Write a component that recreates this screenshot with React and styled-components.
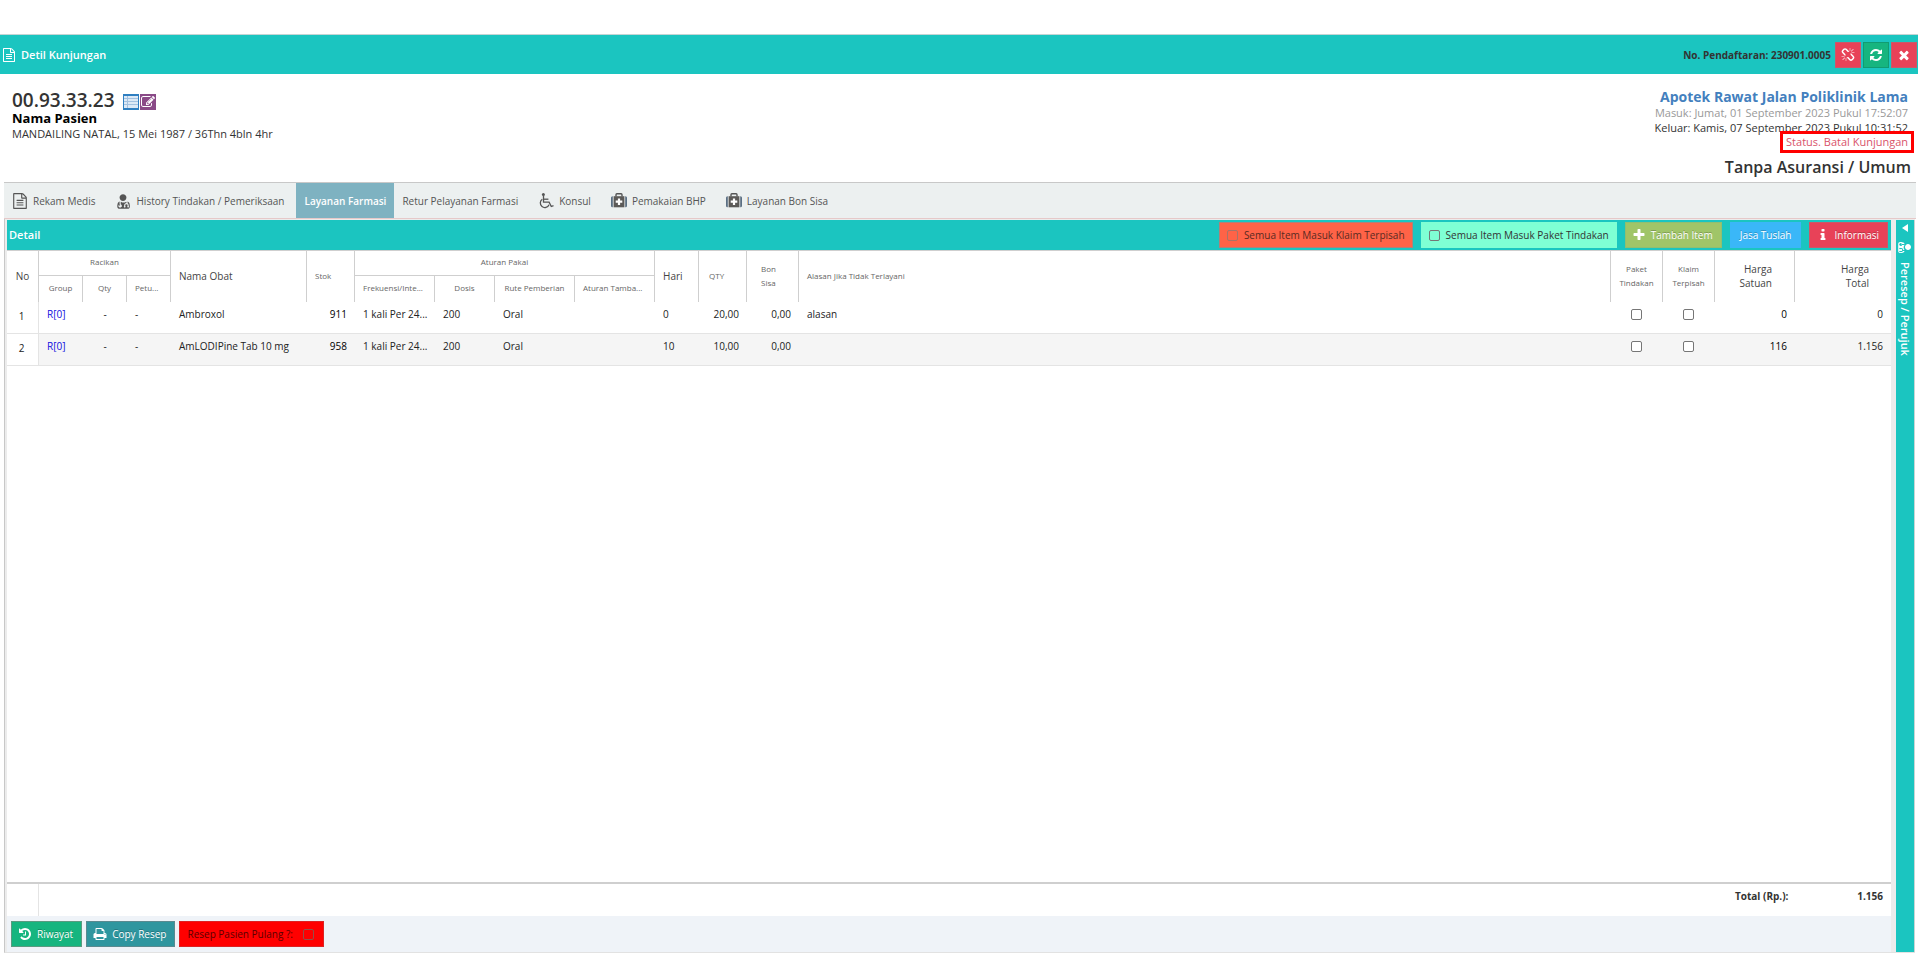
import React from "react";
import styled, { createGlobalStyle } from "styled-components";

const TEAL = "#1bc5c0";
const LINE = "#cfcfcf";

const Global = createGlobalStyle`
  *, *::before, *::after { box-sizing: border-box; }
  body {
    margin: 0;
    background: #fff;
    color: #333;
    font: 10px/16px "Open Sans", sans-serif;
  }
  button, input { font: inherit; margin: 0; }
`;

/* ---------- icons ---------- */

const paths = {
  file: "M1596 380q28 28 48 76t20 88v1152q0 40-28 68t-68 28h-1344q-40 0-68-28t-28-68v-1600q0-40 28-68t68-28h896q40 0 88 20t76 48zm-444-244v376h376q-10-29-22-41l-313-313q-12-12-41-22zm384 1528v-1024h-416q-40 0-68-28t-28-68v-416h-768v1536h1280zm-1024-864q0-14 9-23t23-9h704q14 0 23 9t9 23v64q0 14-9 23t-23 9h-704q-14 0-23-9t-9-23v-64zm736 224q14 0 23 9t9 23v64q0 14-9 23t-23 9h-704q-14 0-23-9t-9-23v-64q0-14 9-23t23-9h704zm0 256q14 0 23 9t9 23v64q0 14-9 23t-23 9h-704q-14 0-23-9t-9-23v-64q0-14 9-23t23-9h704z",
  edit: "M888 1184l116-116-152-152-116 116v56h96v96h56zm440-720q-16-16-33 1l-350 350q-17 17-1 33t33-1l350-350q17-17 1-33zm80 594v190q0 119-84.5 203.5t-203.5 84.5h-832q-119 0-203.5-84.5t-84.5-203.5v-832q0-119 84.5-203.5t203.5-84.5h832q63 0 117 25 15 7 18 23 3 17-9 29l-49 49q-14 14-32 8-23-6-45-6h-832q-66 0-113 47t-47 113v832q0 66 47 113t113 47h832q66 0 113-47t47-113v-126q0-13 9-22l64-64q15-15 35-7t20 29zm-96-738l288 288-672 672h-288v-288zm444 132l-92 92-288-288 92-92q28-28 68-28t68 28l152 152q28 28 28 68t-28 68z",
  times: "M1490 1322q0 40-28 68l-136 136q-28 28-68 28t-68-28l-294-294-294 294q-28 28-68 28t-68-28l-136-136q-28-28-28-68t28-68l294-294-294-294q-28-28-28-68t28-68l136-136q28-28 68-28t68 28l294 294 294-294q28-28 68-28t68 28l136 136q28 28 28 68t-28 68l-294 294 294 294q28 28 28 68z",
  plus: "M1600 736v192q0 40-28 68t-68 28h-416v416q0 40-28 68t-68 28h-192q-40 0-68-28t-28-68v-416h-416q-40 0-68-28t-28-68v-192q0-40 28-68t68-28h416v-416q0-40 28-68t68-28h192q40 0 68 28t28 68v416h416q40 0 68 28t28 68z",
  refresh: "M1639 1056q0 5-1 7-64 268-268 434.5t-478 166.5q-146 0-282.5-55t-243.5-157l-129 129q-19 19-45 19t-45-19-19-45v-448q0-26 19-45t45-19h448q26 0 45 19t19 45-19 45l-137 137q71 66 161 102t187 36q134 0 250-65t186-179q11-17 53-117 8-23 30-23h192q13 0 22.5 9.5t9.5 22.5zm25-800v448q0 26-19 45t-45 19h-448q-26 0-45-19t-19-45 19-45l138-138q-148-137-349-137-134 0-250 65t-186 179q-11 17-53 117-8 23-30 23h-199q-13 0-22.5-9.5t-9.5-22.5v-7q65-268 270-434.5t480-166.5q146 0 284 55.5t245 156.5l130-129q19-19 45-19t45 19 19 45z",
  history: "M1664 896q0 156-61 298t-164 245-245 164-298 61q-172 0-327-72.5t-264-204.5q-7-10-6.5-22.5t8.5-20.5l137-138q10-9 25-9 16 2 23 12 73 95 179 147t225 52q104 0 198.5-40.5t163.5-109.5 109.5-163.5 40.5-198.5-40.5-198.5-109.5-163.5-163.5-109.5-198.5-40.5q-98 0-188 35.5t-160 101.5l137 138q31 30 14 69-17 40-59 40h-448q-26 0-45-19t-19-45v-448q0-42 40-59 39-17 69 14l130 129q107-101 244.5-156.5t284.5-55.5q156 0 298 61t245 164 164 245 61 298zM1024 608v448q0 14-9 23t-23 9h-320q-14 0-23-9t-9-23v-64q0-14 9-23t23-9h224v-352q0-14 9-23t23-9h64q14 0 23 9t9 23z",
  print: "M448 1536h896v-256h-896v256zm0-640h896v-384h-160q-40 0-68-28t-28-68v-160h-640v640zm1152 64q0-26-19-45t-45-19-45 19-19 45 19 45 45 19 45-19 19-45zm128 0v416q0 13-9.5 22.5t-22.5 9.5h-224v160q0 40-28 68t-68 28h-960q-40 0-68-28t-28-68v-160h-224q-13 0-22.5-9.5t-9.5-22.5v-416q0-79 56.5-135.5t135.5-56.5h64v-544q0-40 28-68t68-28h672q40 0 88 20t76 48l152 152q28 28 48 76t20 88v256h64q79 0 135.5 56.5t56.5 135.5z",
  info: "M1216 1344v128q0 26-19 45t-45 19h-512q-26 0-45-19t-19-45v-128q0-26 19-45t45-19h64v-384h-64q-26 0-45-19t-19-45v-128q0-26 19-45t45-19h384q26 0 45 19t19 45v576h64q26 0 45 19t19 45zm-128-1152v192q0 26-19 45t-45 19h-256q-26 0-45-19t-19-45v-192q0-26 19-45t45-19h256q26 0 45 19t19 45z",
  unlink: "M503 1271l-256 256q-10 9-23 9-12 0-23-9-9-10-9-23t9-23l256-256q10-9 23-9t23 9q9 10 9 23t-9 23zm169 41v320q0 14-9 23t-23 9-23-9-9-23v-320q0-14 9-23t23-9 23 9 9 23zm-224-224q0 14-9 23t-23 9h-320q-14 0-23-9t-9-23 9-23 23-9h320q14 0 23 9t9 23zm1264 128q0 120-85 203l-147 146q-83 83-203 83-121 0-204-85l-334-335q-21-21-42-56l239-18 273 274q27 27 68 27.5t68-26.5l147-146q28-28 28-67 0-40-28-68l-274-275 18-239q35 21 56 42l336 336q84 86 84 204zm-617-724l-239 18-273-274q-28-28-68-28-39 0-68 27l-147 146q-28 28-28 67 0 40 28 68l274 274-18 240q-35-21-56-42l-336-336q-84-86-84-204 0-120 85-203l147-146q83-83 203-83 121 0 204 85l334 335q21 21 42 56zm633 84q0 14-9 23t-23 9h-320q-14 0-23-9t-9-23 9-23 23-9h320q14 0 23 9t9 23zm-544-544v320q0 14-9 23t-23 9-23-9-9-23v-320q0-14 9-23t23-9 23 9 9 23zm407 151l-256 256q-11 9-23 9t-23-9q-9-10-9-23t9-23l256-256q10-9 23-9t23 9q9 10 9 23t-9 23z",
  doctor: "M576 1344q0 26-19 45t-45 19-45-19-19-45 19-45 45-19 45 19 19 45zm1088 160q0 121-73 191t-194 70h-874q-121 0-194-70t-73-191q0-68 5.5-131t24-138 47.5-132.5 81-103 120-60.5q-22 52-22 120v203q-58 20-93 70t-35 111q0 80 56 136t136 56 136-56 56-136q0-61-35.5-111t-92.5-70v-203q0-62 25-93 132 104 295 104t295-104q25 31 25 93v64q-106 0-181 75t-75 181v89q-32 29-32 71 0 40 28 68t68 28 68-28 28-68q0-42-32-71v-89q0-52 38-90t90-38 90 38 38 90v89q-32 29-32 71 0 40 28 68t68 28 68-28 28-68q0-42-32-71v-89q0-68-34.5-127.5t-93.5-93.5q0-10 .5-42.5t0-48-2.5-41.5-7-47-13-40q68 15 120 60.5t81 103 47.5 132.5 24 138 5.5 131zm-384-992q0 159-112.5 271.5t-271.500 112.500-271.500-112.500-112.500-271.500 112.500-271.500 271.500-112.500 271.500 112.500 112.500 271.500z",
};

const Svg = styled.svg`
  flex: none;
  display: block;
`;

const Glyph = ({ name, size = 14, className }) => (
  <Svg className={className} width={size} height={size} viewBox="0 0 1792 1792" fill="currentColor" aria-hidden="true">
    <path d={paths[name]} />
  </Svg>
);

const SideGlyph = styled(Glyph)`
  transform: rotate(90deg);
`;

const Wheelchair = () => (
  <Svg width="16" height="16" viewBox="0 0 16 16" fill="none" stroke="currentColor" strokeWidth="1.3" aria-hidden="true">
    <circle cx="5.4" cy="1.600" r="1.500" fill="currentColor" stroke="none" />
    <path d="M5.500 2.800v6.400h5.600l2.200 4.300 2.200-.8" />
    <path d="M5.600 6.200h4.800" />
    <path d="M4.300 6.300a4.500 4.500 0 1 0 6.700 5.400" />
  </Svg>
);

const Medkit = () => (
  <Svg width="16" height="16" viewBox="0 0 16 16" aria-hidden="true">
    <path d="M5 3.500V1.700q0-.9.900-.9h4.200q.9 0 .9.900V3.500" fill="none" stroke="#555" strokeWidth="1.400" />
    <path d="M1.800 3.200H1.500Q0 3.200 0 4.700v8.100q0 1.500 1.500 1.500h.3zM14.200 3.200h.3q1.500 0 1.500 1.500v8.100q0 1.500-1.500 1.500h-.3z" fill="#5b6f83" />
    <path d="M2.600 3.200h10.800v11.100H2.600z" fill="#5c5a58" />
    <path d="M6.900 5.500h2.200v2.100h2.200v2.200H9.100v2.100H6.900V9.800H4.700V7.600h2.200z" fill="#fff" />
  </Svg>
);

const ListTile = () => (
  <Svg width="16" height="16" viewBox="0 0 16 16" aria-hidden="true">
    <path d="M0 0h16v16H0z" fill="#2f7fc1" />
    <path d="M1 2h14v12H1z" fill="#dce9f6" />
    <path d="M1 4.500h14M1 7.500h14M1 10.500h14M4.500 2v12" stroke="#a3c1e0" />
  </Svg>
);

/* ---------- page shell ---------- */

const Page = styled.div`
  display: flex;
  flex-direction: column;
  min-height: 100vh;
  padding: 34px 0 4px;
`;

const TitleBar = styled.header`
  display: flex;
  align-items: center;
  justify-content: space-between;
  height: 40px;
  padding: 0 1px 0 2px;
  border-top: 1px solid #c4d4d4;
  background: ${TEAL};
`;

const Title = styled.h1`
  display: flex;
  align-items: center;
  gap: 5px;
  margin: 0;
  color: #fff;
  font-size: 11px;
  font-weight: 600;
`;

const TitleTools = styled.div`
  display: flex;
  align-items: center;
  gap: 2px;
`;

const RegNumber = styled.span`
  margin-right: 2px;
  font-weight: 700;
`;

const SquareButton = styled.button`
  display: grid;
  place-items: center;
  width: 26px;
  height: 26px;
  padding: 0;
  border: 1px solid ${(p) => p.$edge};
  background: ${(p) => p.$bg};
  color: #fff;
`;

const Patient = styled.section`
  display: flex;
  justify-content: space-between;
  height: 108px;
  padding: 15px 7px 0 12px;
`;

const PatientId = styled.h2`
  display: flex;
  align-items: flex-end;
  gap: 8px;
  margin: 0;
  font-size: 19px;
  line-height: 22px;
  font-weight: 600;
`;

const Tiles = styled.span`
  display: flex;
  gap: 1px;
  padding-bottom: 1px;
`;

const Tile = styled.button`
  display: grid;
  place-items: center;
  width: 16px;
  height: 16px;
  padding: 0;
  border: 0;
  background: ${(p) => p.$bg};
  color: #fff;
`;

const PatientName = styled.p`
  margin: 0;
  color: #000;
  font-size: 13px;
  line-height: 14px;
  font-weight: 700;
`;

const PatientMeta = styled.p`
  margin: 1px 0 0;
  font-size: 11px;
`;

const Visit = styled.div`
  display: flex;
  flex-direction: column;
  align-items: flex-end;
`;

const VisitUnit = styled.h2`
  margin: 0 3px 0 0;
  color: #4380be;
  font-size: 14px;
  line-height: 16px;
  font-weight: 700;
`;

const VisitLine = styled.p`
  margin: 0 3px 0 0;
  color: ${(p) => p.$color || "#333"};
  font-size: 11px;
  line-height: 15px;
`;

const StatusLine = styled(VisitLine)`
  position: relative;
  line-height: 14px;
  &::after {
    content: "";
    position: absolute;
    inset: -4px -6px;
    border: 3px solid #f00;
  }
`;

const Insurance = styled.p`
  margin: 6px 0 0;
  font-size: 16px;
  line-height: 24px;
  font-weight: 600;
`;

/* ---------- tabs ---------- */

const Tabs = styled.nav`
  display: flex;
  height: 37px;
  margin: 0 2px 0 4px;
  border-top: 1px solid #c8c8c8;
  border-bottom: 1px solid #e6c9c9;
  background: #ecf0f0;
`;

const Tab = styled.button`
  display: flex;
  align-items: center;
  gap: 5px;
  padding: ${(p) => (p.$active ? "0 8px" : "0 12px 0 8px")};
  border: 0;
  background: ${(p) => (p.$active ? "#7eb2c1" : "transparent")};
  color: ${(p) => (p.$active ? "#fff" : "#555")};
  font-weight: ${(p) => (p.$active ? 600 : 400)};
`;

/* ---------- workspace ---------- */

const Workspace = styled.main`
  flex: 1;
  display: flex;
  margin: 0 3px 0 4px;
  padding-top: 1px;
  border-left: 1px solid #c8c8c8;
  border-bottom: 1px solid #e2e2e2;
  background: #ececec;
`;

const Panel = styled.section`
  flex: 1;
  min-width: 0;
  display: flex;
  flex-direction: column;
  margin: 0 5px 0 2px;
  background: #fff;
`;

const PanelBar = styled.div`
  display: flex;
  align-items: center;
  gap: 8px;
  height: 31px;
  padding: 0 3px 0 2px;
  border-bottom: 1px solid ${LINE};
  background: ${TEAL};
`;

const PanelTitle = styled.h2`
  flex: 1;
  margin: 0;
  color: #fff;
  font-size: 11px;
  font-weight: 600;
`;

const Action = styled.button`
  display: flex;
  align-items: center;
  gap: 5px;
  height: 26px;
  padding: 0 8px 0 ${(p) => (p.$plain ? 9 : 6)}px;
  border: 1px solid ${(p) => p.$edge || p.$bg};
  background: ${(p) => p.$bg};
  color: #fff;
  text-shadow: 0 -1px 0 rgba(0, 0, 0, 0.25);
`;

const CheckPill = styled.label`
  display: flex;
  align-items: center;
  gap: ${(p) => (p.$loose ? 10 : 6)}px;
  height: 26px;
  padding: 0 ${(p) => (p.$loose ? 9 : 7)}px 0 7px;
  border: 1px solid ${(p) => p.$edge || p.$bg};
  background: ${(p) => p.$bg};
  color: ${(p) => p.$ink || "#333"};
`;

const Tick = styled.input.attrs({ type: "checkbox" })`
  appearance: none;
  flex: none;
  width: 11px;
  height: 11px;
  border: 1px solid ${(p) => p.$edge || "#767676"};
  border-radius: 2px;
  background: ${(p) => p.$bg || "#fff"};
`;

/* ---------- table ---------- */

const Grid = styled.table`
  width: 100%;
  table-layout: fixed;
  border-collapse: separate;
  border-spacing: 0;
`;

const Col = styled.col`
  width: ${(p) => (p.$w ? `${p.$w}px` : "auto")};
`;

const Head = styled.th`
  height: ${(p) => (p.$sub ? 26 : 25)}px;
  padding: 0 ${(p) => p.$pad || 8}px 2px;
  border-right: ${(p) => (p.$last ? "0" : `1px solid ${LINE}`)};
  border-bottom: ${(p) => (p.$group ? `1px solid ${LINE}` : "0")};
  color: ${(p) => (p.$big ? "#444" : "#666")};
  font-size: ${(p) => (p.$big ? 10 : 8)}px;
  line-height: 14px;
  font-weight: 400;
  text-align: ${(p) => p.$align || "left"};
  white-space: ${(p) => (p.$sub ? "nowrap" : "normal")};
`;

const Cell = styled.td`
  height: 32px;
  padding: 0 8px 8px;
  border-bottom: 1px solid #e4e4e4;
  background: ${(p) => (p.$striped ? "#f5f5f5" : "#fff")};
  color: ${(p) => p.$color || "#222"};
  text-align: ${(p) => p.$align || "left"};
  white-space: nowrap;
`;

const NumberCell = styled(Cell)`
  padding: 0 2px 4px 0;
  border-right: 1px solid #e4e4e4;
  background: #fff;
  text-align: center;
`;

const CheckCell = styled(Cell)`
  padding: 0 2px 8px 0;
  text-align: center;
  & > ${Tick} { vertical-align: middle; }
`;

const GroupLink = styled.a`
  color: #1010e0;
  text-decoration: none;
`;

const Totals = styled.div`
  display: flex;
  justify-content: flex-end;
  height: 34px;
  margin-top: auto;
  padding: 4px 8px 0 0;
  border-top: 2px solid ${LINE};
  background: linear-gradient(#e4e4e4, #e4e4e4) 31px 0 / 1px 100% no-repeat;
  font-weight: 700;
`;

const TotalLabel = styled.span`
  width: 96px;
`;

const TotalValue = styled.span`
  width: 52px;
  text-align: right;
`;

const BottomBar = styled.footer`
  display: flex;
  align-items: center;
  gap: 4px;
  height: 36px;
  padding: 0 4px;
  background: #eff3f8;
`;

const SideStrip = styled.button`
  display: flex;
  flex-direction: column;
  align-items: center;
  gap: 8px;
  width: 19px;
  padding: 4px 0 0;
  border: 0;
  border-right: 1px solid #c8d4d4;
  background: ${TEAL};
  color: #fff;
`;

const SideLabel = styled.span`
  writing-mode: vertical-rl;
  font-size: 11px;
  font-weight: 600;
`;

const columns = [32, 44, 44, 44, 136, 48, 80, 60, 80, 80, 44, 48, 52, null, 52, 52, 80, 96];

const rows = [
  { no: 1, group: "R[0]", name: "Ambroxol", stock: "911", freq: "1 kali Per 24...", dose: "200", route: "Oral", days: "0", qty: "20,00", owed: "0,00", reason: "alasan", price: "0", total: "0" },
  { no: 2, group: "R[0]", name: "AmLODIPine Tab 10 mg", stock: "958", freq: "1 kali Per 24...", dose: "200", route: "Oral", days: "10", qty: "10,00", owed: "0,00", reason: "", price: "116", total: "1.156" },
];

const tabs = [
  { label: "Rekam Medis", icon: <Glyph name="file" size={16} /> },
  { label: "History Tindakan / Pemeriksaan", icon: <Glyph name="doctor" size={16} /> },
  { label: "Layanan Farmasi", active: true },
  { label: "Retur Pelayanan Farmasi" },
  { label: "Konsul", icon: <Wheelchair /> },
  { label: "Pemakaian BHP", icon: <Medkit /> },
  { label: "Layanan Bon Sisa", icon: <Medkit /> },
];

export default function App() {
  return (
    <>
      <Global />
      <Page>
        <TitleBar>
          <Title><Glyph name="file" />Detil Kunjungan</Title>
          <TitleTools>
            <RegNumber>No. Pendaftaran: 230901.0005</RegNumber>
            <SquareButton $bg="#e84258" $edge="#c9596a" aria-label="Putuskan"><Glyph name="unlink" /></SquareButton>
            <SquareButton $bg="#16b57f" $edge="#109c72" aria-label="Muat ulang"><Glyph name="refresh" /></SquareButton>
            <SquareButton $bg="#e84258" $edge="#c9596a" aria-label="Tutup"><Glyph name="times" /></SquareButton>
          </TitleTools>
        </TitleBar>

        <Patient>
          <div>
            <PatientId>
              00.93.33.23
              <Tiles>
                <Tile aria-label="Daftar"><ListTile /></Tile>
                <Tile $bg="#8a4a87" aria-label="Ubah"><Glyph name="edit" /></Tile>
              </Tiles>
            </PatientId>
            <PatientName>Nama Pasien</PatientName>
            <PatientMeta>MANDAILING NATAL, 15 Mei 1987 / 36Thn 4bln 4hr</PatientMeta>
          </div>
          <Visit>
            <VisitUnit>Apotek Rawat Jalan Poliklinik Lama</VisitUnit>
            <VisitLine $color="#999">Masuk: Jumat, 01 September 2023 Pukul 17:52:07</VisitLine>
            <VisitLine>Keluar: Kamis, 07 September 2023 Pukul 10:31:52</VisitLine>
            <StatusLine $color="#d9536a">Status. Batal Kunjungan</StatusLine>
            <Insurance>Tanpa Asuransi / Umum</Insurance>
          </Visit>
        </Patient>

        <Tabs>
          {tabs.map((t) => (
            <Tab key={t.label} $active={t.active}>{t.icon}{t.label}</Tab>
          ))}
        </Tabs>

        <Workspace>
          <Panel>
            <PanelBar>
              <PanelTitle>Detail</PanelTitle>
              <CheckPill $bg="#ff6347" $edge="#b08078" $ink="#5a2a22">
                <Tick $bg="transparent" $edge="#a87468" />Semua Item Masuk Klaim Terpisah
              </CheckPill>
              <CheckPill $bg="#7fffd4">
                <Tick $bg="transparent" />Semua Item Masuk Paket Tindakan
              </CheckPill>
              <Action $bg="#a0c568" $edge="#8fbf72"><Glyph name="plus" />Tambah Item</Action>
              <Action $bg="#3ab7f8" $plain>Jasa Tuslah</Action>
              <Action $bg="#e84258" $edge="#c9596a"><Glyph name="info" />Informasi</Action>
            </PanelBar>

            <Grid>
              <colgroup>{columns.map((w, i) => <Col key={i} $w={w} />)}</colgroup>
              <thead>
                <tr>
                  <Head rowSpan={2} $big $align="center">No</Head>
                  <Head colSpan={3} $group $align="center">Racikan</Head>
                  <Head rowSpan={2} $big>Nama Obat</Head>
                  <Head rowSpan={2}>Stok</Head>
                  <Head colSpan={4} $group $align="center">Aturan Pakai</Head>
                  <Head rowSpan={2} $big>Hari</Head>
                  <Head rowSpan={2} $pad={10}>QTY</Head>
                  <Head rowSpan={2} $pad={14}>Bon Sisa</Head>
                  <Head rowSpan={2}>Alasan Jika Tidak Terlayani</Head>
                  <Head rowSpan={2} $align="center">Paket Tindakan</Head>
                  <Head rowSpan={2} $align="center">Klaim Terpisah</Head>
                  <Head rowSpan={2} $big $align="right" $pad={22}>Harga Satuan</Head>
                  <Head rowSpan={2} $big $align="right" $pad={22} $last>Harga<br />Total</Head>
                </tr>
                <tr>
                  <Head $sub $align="center">Group</Head>
                  <Head $sub $align="center">Qty</Head>
                  <Head $sub>Petu...</Head>
                  <Head $sub>Frekuensi/Inte...</Head>
                  <Head $sub $align="center">Dosis</Head>
                  <Head $sub $align="center">Rute Pemberian</Head>
                  <Head $sub>Aturan Tamba...</Head>
                </tr>
              </thead>
              <tbody>
                {rows.map((r, i) => {
                  const s = i % 2 === 1;
                  return (
                    <tr key={r.no}>
                      <NumberCell>{r.no}</NumberCell>
                      <Cell $striped={s}><GroupLink href="#">{r.group}</GroupLink></Cell>
                      <Cell $striped={s} $align="center">-</Cell>
                      <Cell $striped={s}>-</Cell>
                      <Cell $striped={s}>{r.name}</Cell>
                      <Cell $striped={s} $align="right" $color="#000">{r.stock}</Cell>
                      <Cell $striped={s}>{r.freq}</Cell>
                      <Cell $striped={s}>{r.dose}</Cell>
                      <Cell $striped={s}>{r.route}</Cell>
                      <Cell $striped={s} />
                      <Cell $striped={s}>{r.days}</Cell>
                      <Cell $striped={s} $align="right">{r.qty}</Cell>
                      <Cell $striped={s} $align="right">{r.owed}</Cell>
                      <Cell $striped={s}>{r.reason}</Cell>
                      <CheckCell $striped={s}><Tick aria-label={`Paket Tindakan ${r.name}`} /></CheckCell>
                      <CheckCell $striped={s}><Tick aria-label={`Klaim Terpisah ${r.name}`} /></CheckCell>
                      <Cell $striped={s} $align="right" $color="#000">{r.price}</Cell>
                      <Cell $striped={s} $align="right">{r.total}</Cell>
                    </tr>
                  );
                })}
              </tbody>
            </Grid>

            <Totals>
              <TotalLabel>Total (Rp.):</TotalLabel>
              <TotalValue>1.156</TotalValue>
            </Totals>

            <BottomBar>
              <Action $bg="#16b57f" $edge="#5a9a80"><Glyph name="history" />Riwayat</Action>
              <Action $bg="#2f969f" $edge="#5a8a90"><Glyph name="print" />Copy Resep</Action>
              <CheckPill $bg="#f00" $edge="#d22" $ink="#5a0000" $loose>
                Resep Pasien Pulang ?:<Tick $bg="transparent" $edge="#94504a" />
              </CheckPill>
            </BottomBar>
          </Panel>

          <SideStrip>
            <Svg width="6" height="8" viewBox="0 0 6 8" aria-hidden="true"><path d="M6 0v8L0 4z" fill="#fff" /></Svg>
            <SideGlyph name="doctor" />
            <SideLabel>Peresep / Perujuk</SideLabel>
          </SideStrip>
        </Workspace>
      </Page>
    </>
  );
}
